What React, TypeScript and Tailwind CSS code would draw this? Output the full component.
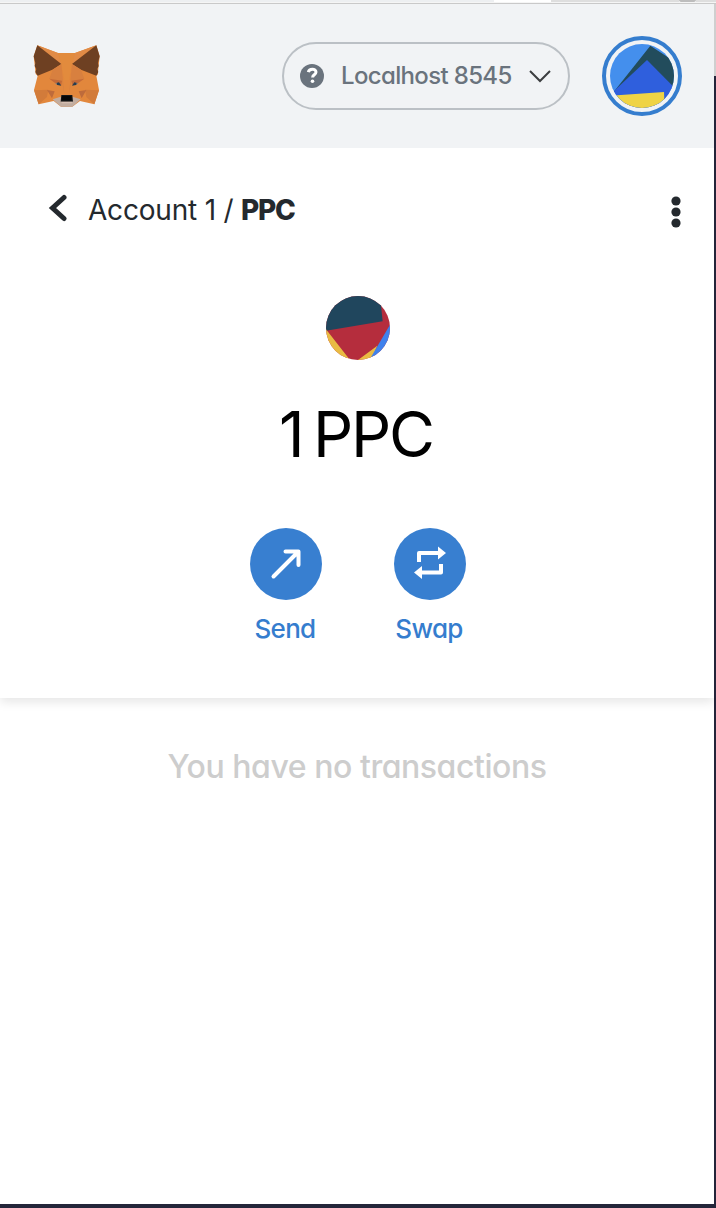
import React from "react";

function Fox() {
  return (
    <svg className="block h-16 w-[67px]" viewBox="39 42 201 192">
      <path d="M52 46L114 69H165L229 46L239 79L233 134L229 137L237 180L223 223L180 213L157 230H123L101 213L56 223L42 180L53 137L47 132L41 79Z" fill="#e2873c" />
      <path d="M52 46L114 69L124 102ZM229 46L165 69L156 102Z" fill="#e18b46" />
      <path d="M114 69H165L156 102L147 150H133L124 102Z" fill="#e28b3d" />
      <path d="M52 46L124 102L97 119L53 137L46 126L49 117L44 108L46 99L41 79ZM229 46L156 102L183 119L229 137L235 126L232 117L236 108L234 99L239 79Z" fill="#6e4022" />
      <path d="M124 102L98 119L88 146L126 154L133 192ZM156 102L183 119L193 146L154 154L147 192Z" fill="#d8803f" />
      <path d="M88 146L126 152L124 166L104 158ZM193 146L154 152L157 166L176 158Z" fill="#c46a38" />
      <path d="M42 181L85 179L81 201L56 223ZM237 181L195 179L199 201L223 223Z" fill="#d27b3a" />
      <path d="M81 180L104 184L96 205ZM199 180L176 184L185 205Z" fill="#be6b3b" />
      <path d="M98 208L122 200L126 214H154L158 200L182 208L157 230H123Z" fill="#c2ada0" />
      <path d="M124 195H157L159 215H122Z" fill="#151719" />
      <path d="M122 215H159L155 220H127Z" fill="#d5bfb2" />
      <path d="M126 198H154L155 211H125Z" fill="#050607" />
      <path d="M106 160L117 157L124 167L112 165ZM174 160L163 157L156 167L168 165Z" fill="#263d50" />
      <path d="M104 160L111 160L110 164ZM176 160L169 160L170 164Z" fill="#b18c73" />
    </svg>
  );
}

function AccountAvatar() {
  return (
    <div className="flex size-20 shrink-0 items-center justify-center rounded-full border-4 border-[#357dce]">
      <svg className="size-16 overflow-hidden rounded-full" viewBox="0 0 192 192">
        <rect width="192" height="192" fill="#448fed" />
        <path d="M121 5L192 52V134L111 62L6 150Z" fill="#224c5c" />
        <path d="M111 48L192 130V192H0V152Z" fill="#2f5fdd" />
        <path d="M0 155L162 144L164 192H0Z" fill="#efd345" />
      </svg>
    </div>
  );
}

function NetworkPicker() {
  return (
    <button className="flex h-[68px] w-72 items-center rounded-full border-2 border-[#bbc0c5] pl-4 text-[#6a737d]">
      <svg className="size-6 shrink-0" viewBox="0 0 24 24">
        <circle cx="12" cy="12" r="12" fill="currentColor" />
        <path d="M8.3 8.1C9.2 4.2 16 4.3 16 8C16 10.8 12.6 10.6 12.6 13.4" fill="none" stroke="#fff" strokeWidth="3" />
        <circle cx="12.5" cy="17.2" r="1.8" fill="#fff" />
      </svg>
      <span className="ml-[17px] w-[174px] whitespace-nowrap text-left text-[24px] font-medium leading-8 tracking-[-0.65px]">Localhost 8545</span>
      <svg className="ml-[13px] h-3.5 w-6 shrink-0" viewBox="0 0 24 14">
        <path d="M2 2L12 12L22 2" fill="none" stroke="#3c3e40" strokeWidth="2" />
      </svg>
    </button>
  );
}

function TokenIcon() {
  return (
    <svg className="size-16 overflow-hidden rounded-full" viewBox="0 0 192 192">
      <rect width="192" height="192" fill="#b52d3d" />
      <path d="M0 0H162L170 76L0 104Z" fill="#20465d" />
      <path d="M0 100L72 192H0ZM96 192L154 149L136 192Z" fill="#e9bb43" />
      <path d="M192 86V192H130Z" fill="#3f81ec" />
    </svg>
  );
}

function Action({ label, children }: { label: string; children: React.ReactNode }) {
  return (
    <button className="flex w-[72px] flex-col items-center text-[#357dce]">
      <span className="flex size-[72px] items-center justify-center rounded-full bg-[#387fd0]">{children}</span>
      <span className="mt-[11px] -ml-0.5 whitespace-nowrap text-[26px] font-medium leading-9 tracking-[-0.7px]">{label}</span>
    </button>
  );
}

export default function App() {
  return (
    <div className="h-[1208px] w-[716px] overflow-hidden bg-white font-['Inter','Liberation_Sans',sans-serif] [font-feature-settings:'cv11']">
      <div className="flex h-1 flex-col">
        <div className="flex h-0.5">
          <div className="w-[494px] bg-[#edeff1]" />
          <div className="w-[57px] bg-white" />
          <div className="w-[128px] bg-[#dedede]" />
          <div className="w-[17px] rounded-b-full bg-[#bdbdbd]" />
          <div className="grow bg-[#dedede]" />
        </div>
        <div className="h-px bg-[#f5f5f5]" />
        <div className="h-px bg-[#c9c9c9]" />
      </div>
      <div className="flex h-[1200px]">
        <main className="w-[714px]">
          <header className="relative z-10 flex h-36 items-center bg-[#f1f3f5]">
            <div className="ml-[33px] w-[249px]"><Fox /></div>
            <NetworkPicker />
            <div className="ml-8"><AccountAvatar /></div>
          </header>
          <section className="h-[550px] shadow-[0_4px_10px_rgba(0,0,0,0.1)]">
            <nav className="flex h-[124px] items-center">
              <svg className="ml-12 mb-1 h-7 w-5 shrink-0" viewBox="0 0 20 28">
                <path d="M16 3.5L4.5 14L16 24.5" fill="none" stroke="#24292e" strokeWidth="5" strokeLinecap="round" />
              </svg>
              <div className="ml-5 flex grow items-baseline whitespace-nowrap text-[28px] leading-10 text-[#24292e]">
                <span className="w-[153px] tracking-[-0.2px]">Account 1 /</span>
                <b className="font-extrabold tracking-[-1.3px]">PPC</b>
              </div>
              <svg className="mt-1 mr-8 h-8 w-3 shrink-0" viewBox="0 0 12 32">
                <g fill="#24292e"><circle cx="6" cy="5" r="4.6" /><circle cx="6" cy="16" r="4.6" /><circle cx="6" cy="27" r="4.6" /></g>
              </svg>
            </nav>
            <div className="flex flex-col items-center pt-6 pl-0.5">
              <TokenIcon />
              <div className="mt-[34px] -ml-1 flex h-20 items-center whitespace-nowrap text-[63px] leading-20 text-black tracking-[-2.2px] [word-spacing:-5px]">1 PPC</div>
              <div className="mt-[54px] flex gap-[72px]">
                <Action label="Send">
                  <svg className="size-9" viewBox="0 0 36 36">
                    <path d="M5.5 30.5L29.5 6.5M17.5 5.5H30.5V19" fill="none" stroke="#fff" strokeWidth="4" strokeLinecap="round" strokeLinejoin="round" />
                  </svg>
                </Action>
                <Action label="Swap">
                  <svg className="mr-px size-9" viewBox="0 0 36 36">
                    <path d="M7 16V7H27M29 18V26.5H9" fill="none" stroke="#fff" strokeWidth="4" strokeLinejoin="round" />
                    <path d="M26 0.5L34 7L26 13.5ZM10 20L2 26.5L10 33Z" fill="#fff" />
                  </svg>
                </Action>
              </div>
            </div>
          </section>
          <p className="mt-[45px] text-center text-[32px] font-medium leading-[48px] tracking-[-0.45px] text-[#cdcdcd]">You have no transactions</p>
        </main>
        <div className="w-0.5">
          <div className="h-[72px] bg-[#cfcfcf]" />
          <div className="h-[1128px] bg-[#24243a]" />
        </div>
      </div>
      <div className="h-1 bg-[#24263a]" />
    </div>
  );
}
